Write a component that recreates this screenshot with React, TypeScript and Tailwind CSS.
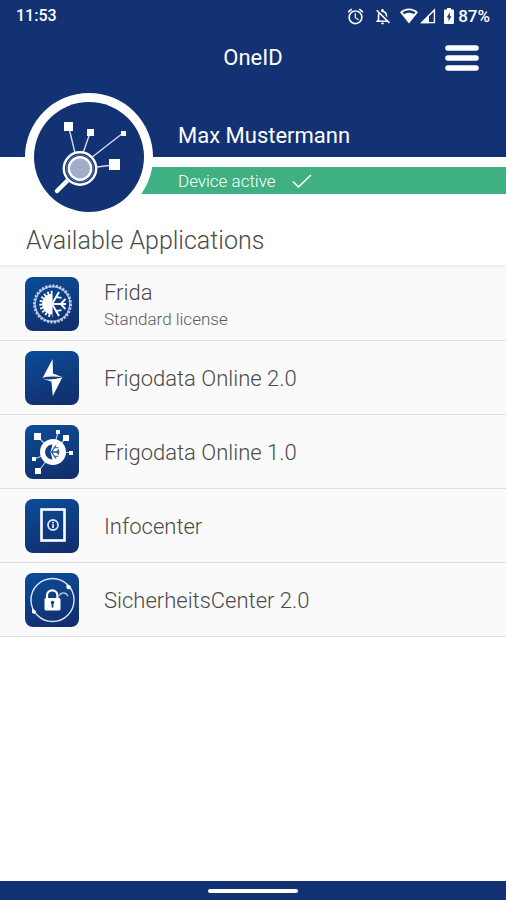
import type { ReactNode } from "react";
import { MdAlarm, MdOutlineNotificationsOff } from "react-icons/md";

interface AppEntry {
  name: string;
  license?: string;
  icon: ReactNode;
}

function StatusBar() {
  return (
    <div className="flex h-8 items-center justify-between px-4 font-medium leading-5">
      <span className="text-base">11:53</span>
      <div className="flex items-center text-[17px]">
        <MdAlarm className="mr-2 size-[19px]" aria-label="Alarm set" />
        <MdOutlineNotificationsOff className="mr-2 size-[19px]" aria-label="Muted" />
        <svg className="w-[18px]" viewBox="0 0 18 16" aria-label="Wi-Fi">
          <path d="M0 4.2C5 -.8 13-.8 18 4.2L9 15.5Z" fill="#fff" />
          <path d="M2.6 4.6C6.4 1.6 11.6 1.6 15.4 4.6L14 6.2C11 4.2 7 4.2 4 6.2Z" fill="#123274" />
        </svg>
        <svg className="ml-0.5 w-4" viewBox="0 0 16 16" aria-label="Mobile signal">
          <path d="M14.4 2V14.6H1.8Z" fill="none" stroke="#fff" strokeWidth="1.4" />
          <path d="M1 15.2L9 7.2V15.2Z" fill="#fff" />
        </svg>
        <svg className="ml-2 w-2.5" viewBox="0 0 10 16" aria-label="Battery charging">
          <path d="M3 0H7V1.6H9Q10 1.6 10 2.6V15Q10 16 9 16H1Q0 16 0 15V2.6Q0 1.6 1 1.6H3Z" fill="#fff" />
          <path d="M5.8 4.2L2.8 9.4H4.5V13.2L7.4 8.2H5.8Z" fill="#123274" />
        </svg>
        <span className="ml-1">87%</span>
      </div>
    </div>
  );
}

function AvatarLogo() {
  return (
    <svg className="size-32" viewBox="0 0 128 128" aria-hidden="true">
      <circle cx="64" cy="64" r="64" fill="#fff" />
      <circle cx="64" cy="64" r="55" fill="#123274" />
      <g stroke="#d5daea" strokeWidth="1.4">
        <path d="M44 35L50 60M65 40L58 60M98 40L66 65M88 72L72 74" fill="none" />
      </g>
      <g fill="#fff">
        <rect x="39" y="29" width="9" height="9" />
        <rect x="62" y="36" width="7" height="7" />
        <rect x="96" y="38" width="5" height="5" />
        <rect x="84" y="66" width="11" height="11" />
      </g>
      <path d="M43 87L32 98" stroke="#fff" strokeWidth="4.5" strokeLinecap="round" />
      <circle cx="55" cy="75.5" r="16.2" fill="#123274" stroke="#fff" strokeWidth="2.4" />
      <circle cx="55" cy="75.5" r="11.2" fill="#a3adc8" stroke="#fff" strokeWidth="2.4" />
      <circle cx="55" cy="75.5" r="13.6" fill="none" stroke="#7484b0" strokeWidth="0.8" />
    </svg>
  );
}

function Tile({ id, children }: { id: string; children: ReactNode }) {
  return (
    <svg className="size-[54px] shrink-0" viewBox="0 0 54 54" aria-hidden="true">
      <defs>
        <linearGradient id={id} x1="0.3" y1="0" x2="0.6" y2="1">
          <stop offset="0" stopColor="#0b4b96" />
          <stop offset="1" stopColor="#122f6e" />
        </linearGradient>
      </defs>
      <rect width="54" height="54" rx="8" fill={`url(#${id})`} />
      {children}
    </svg>
  );
}

function FridaIcon() {
  return (
    <Tile id="tile-frida">
      <circle cx="27.5" cy="27" r="18" fill="none" stroke="#b9c9e1" strokeWidth="3" strokeDasharray="2.2 1.3" />
      <circle cx="27.5" cy="27" r="17.4" fill="none" stroke="#b9c9e1" strokeWidth="1.2" />
      <path d="M27.5 16.5A10.5 10.5 0 0 0 27.5 37.5Z" fill="#fff" />
      <path d="M27.5 15.3A11.7 11.7 0 0 0 27.5 38.7" fill="none" stroke="#fff" strokeWidth="3" strokeDasharray="1.8 1.8" />
      <g fill="none" stroke="#fff" strokeWidth="2">
        <path d="M27 27H41M27 27L34 15M27 27L34 39" />
        <path d="M40.5 22L35.5 27L40.5 32M36.5 20.8L31.5 20.2M36.5 33.2L31.5 33.8" strokeWidth="1.8" />
      </g>
    </Tile>
  );
}

function BoltIcon() {
  return (
    <Tile id="tile-bolt">
      <path d="M27.6 8L17.6 27Q23 24.8 37 26L28 22.6Z" fill="#fff" />
      <path d="M37.4 26.2L27.8 45L26.4 30.6L17.6 27.8Q25 29.8 37.4 26.2Z" fill="#fff" />
    </Tile>
  );
}

function NodesIcon() {
  return (
    <Tile id="tile-nodes">
      <path
        d="M13 12L28 27M33 7L28 27M41 13L28 27M46 27.5H28M9 34L28 27M13 47L28 27"
        fill="none"
        stroke="#b9c8e0"
        strokeWidth="1.2"
      />
      <g fill="#fff">
        <rect x="9" y="8" width="7" height="7" />
        <rect x="31" y="5" width="4" height="4" />
        <rect x="38" y="10" width="6" height="6" />
        <rect x="44" y="26" width="4" height="4" />
        <rect x="7" y="32" width="4" height="4" />
        <rect x="10" y="43" width="6" height="6" />
      </g>
      <circle cx="28" cy="27" r="13" fill="#fff" />
      <path d="M27.5 19.5A7.5 7.5 0 0 0 27.5 34.5L25.5 27Z" fill="#123f84" />
      <path
        d="M26 27H34.5M26.5 27L31 20.5M26.5 27L31 33.5M34 24.5L31.5 27L34 29.5"
        fill="none"
        stroke="#2a5595"
        strokeWidth="1.3"
      />
      <path d="M30 22.8H33.4M30 31.2H33.4" fill="none" stroke="#2a5595" strokeWidth="1.1" />
    </Tile>
  );
}

function InfoIcon() {
  return (
    <Tile id="tile-info">
      <rect x="16.5" y="10.5" width="23" height="31" fill="none" stroke="#fff" strokeWidth="2.6" />
      <circle cx="28" cy="26" r="5" fill="none" stroke="#dbe4f1" strokeWidth="1.8" />
      <path d="M28 23V24.4M28 25.2V29" fill="none" stroke="#dbe4f1" strokeWidth="1.8" />
    </Tile>
  );
}

function LockIcon() {
  return (
    <Tile id="tile-lock">
      <circle cx="27.5" cy="27" r="21.5" fill="none" stroke="#dbe4f1" strokeWidth="1.4" />
      <path d="M41.5 11.5L46 13L44.5 16.5L41.5 15.5ZM7 36L11 38L10 41L7 40Z" fill="#fff" />
      <path d="M22 26V22.5A5.2 5.2 0 0 1 32.4 22.5V26" fill="none" stroke="#fff" strokeWidth="2.2" />
      <rect x="19.5" y="25" width="16" height="12.5" rx="1.5" fill="#fff" />
      <path d="M34 23A4.8 4.8 0 0 1 43 23.4" fill="none" stroke="#a9bcd9" strokeWidth="1.4" />
      <circle cx="27.5" cy="29.5" r="1.7" fill="#123f84" />
      <path d="M27.5 30V34.5" stroke="#123f84" strokeWidth="1.8" />
    </Tile>
  );
}

const apps: AppEntry[] = [
  { name: "Frida", license: "Standard license", icon: <FridaIcon /> },
  { name: "Frigodata Online 2.0", icon: <BoltIcon /> },
  { name: "Frigodata Online 1.0", icon: <NodesIcon /> },
  { name: "Infocenter", icon: <InfoIcon /> },
  { name: "SicherheitsCenter 2.0", icon: <LockIcon /> },
];

export default function App() {
  return (
    <div className="flex min-h-screen flex-col bg-white font-[Roboto,sans-serif] text-[#4a4a4a]">
      <header className="bg-[#123274] text-white">
        <StatusBar />
        <div className="grid h-[52px] grid-cols-[1fr_auto_1fr] items-center px-6">
          <h1 className="col-start-2 text-[22px] leading-7">OneID</h1>
          <button type="button" aria-label="Open menu" className="justify-self-end px-[3px]">
            <svg className="h-[26px] w-[34px]" viewBox="0 0 34 26" aria-hidden="true">
              <path d="M3 3H31M3 13H31M3 23H31" stroke="#fff" strokeWidth="5.6" strokeLinecap="round" />
            </svg>
          </button>
        </div>
      </header>

      <section className="relative" aria-label="Profile">
        <div className="flex h-[73px] items-end bg-[#123274] pb-[7px] pl-[178px] text-white">
          <h2 className="text-[22px] leading-7">Max Mustermann</h2>
        </div>
        <div className="ml-[89px] mt-[10px] flex h-[27px] items-center bg-[#3fb081] pl-[89px] text-white">
          <span className="text-[17px] font-light leading-6">Device active</span>
          <svg className="ml-4 h-[14px] w-5" viewBox="0 0 20 14" aria-hidden="true">
            <path d="M1 7.5L6.5 13L19 1" fill="none" stroke="#fff" strokeWidth="1.6" />
          </svg>
        </div>
        <div className="absolute left-[25px] top-[9px]">
          <AvatarLogo />
        </div>
      </section>

      <main className="flex-1">
        <h2 className="border-b-2 border-[#f0f0f0] pb-2 pl-[26px] pt-[31px] text-[25px] font-light leading-8">
          Available Applications
        </h2>
        <ul>
          {apps.map((app) => (
            <li key={app.name} className="border-b border-[#dedede] bg-[#fafafa]">
              <a href="#" className="flex h-[73px] items-center gap-[25px] pl-[25px] font-light">
                {app.icon}
                <span className="flex flex-col pt-0.5">
                  <span className="text-[22px] leading-7">{app.name}</span>
                  {app.license && (
                    <span className="text-[17px] leading-6 text-[#5c5c5c]">{app.license}</span>
                  )}
                </span>
              </a>
            </li>
          ))}
        </ul>
      </main>

      <footer className="flex h-[19px] items-center justify-center bg-[#123274]">
        <div className="h-1 w-[90px] rounded-full bg-white" />
      </footer>
    </div>
  );
}
